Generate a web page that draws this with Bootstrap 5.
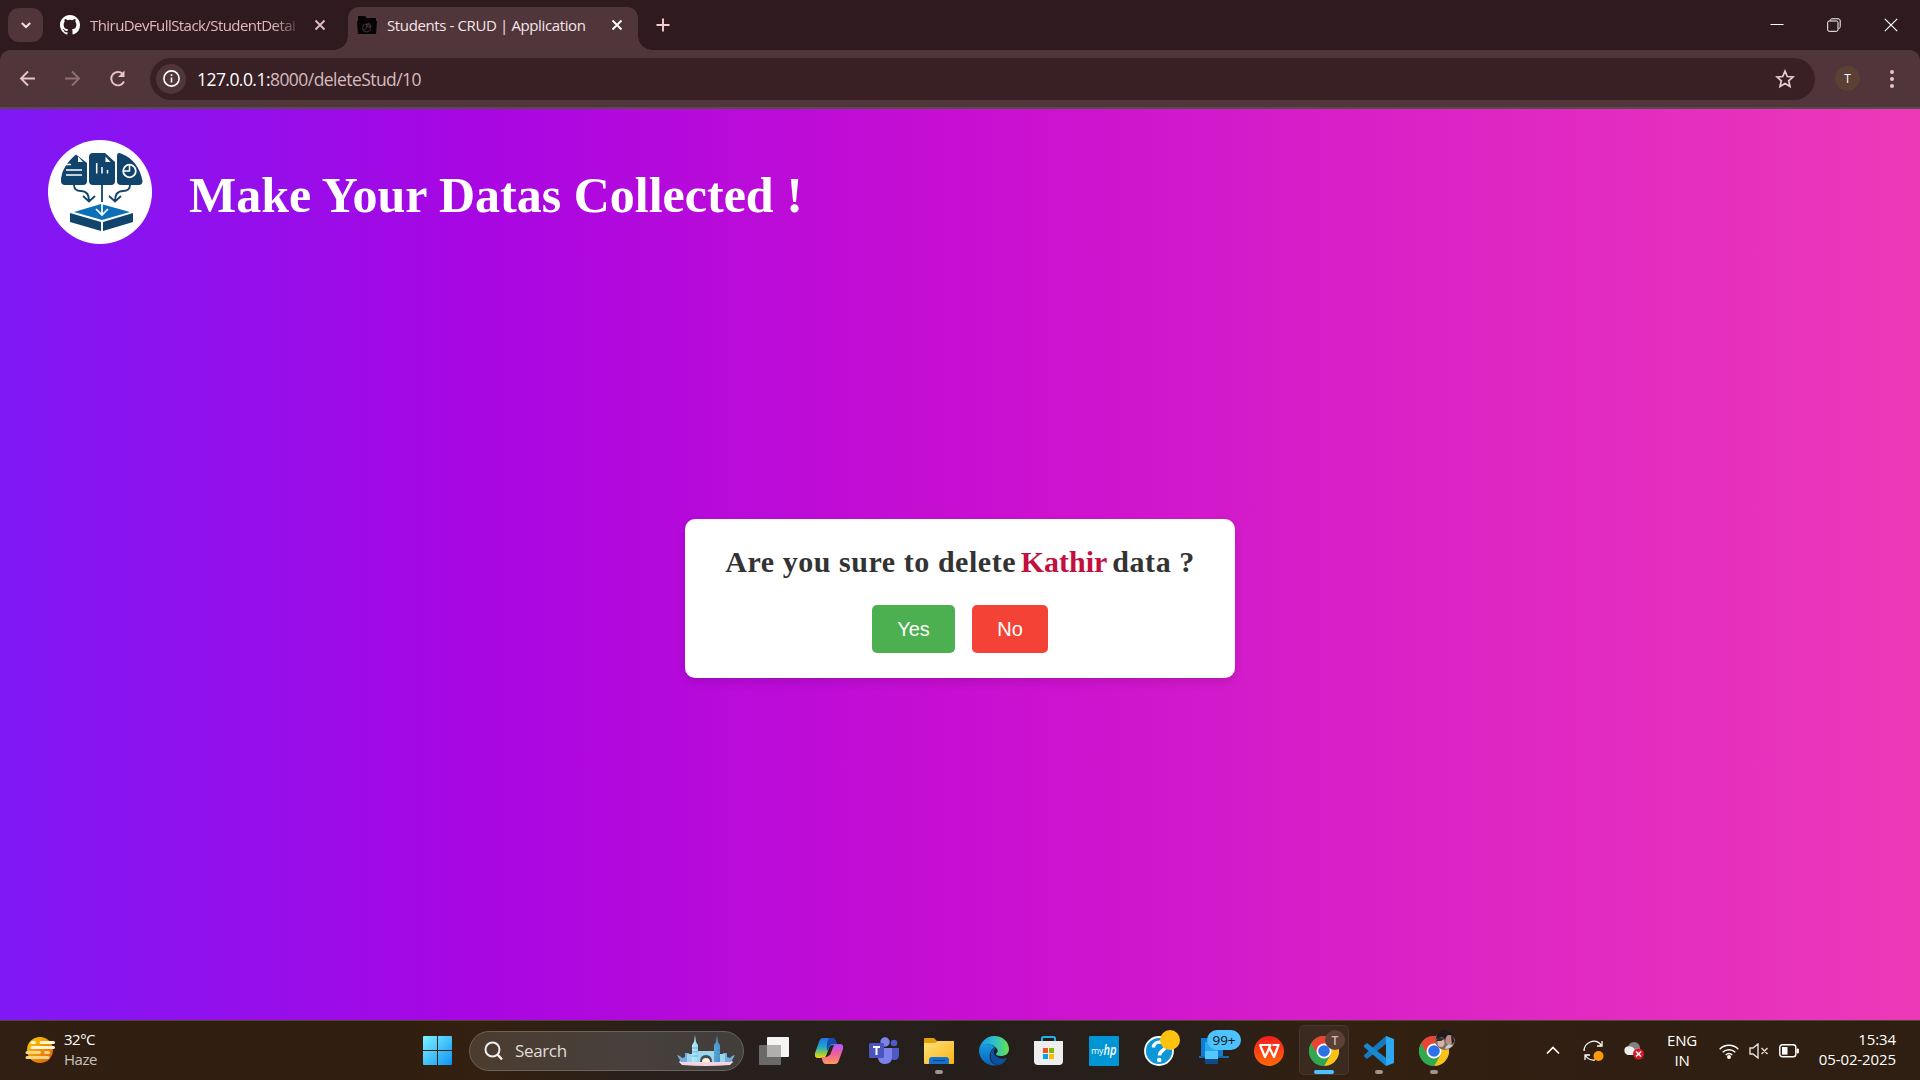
<!DOCTYPE html>
<html lang="en">
<head>
<meta charset="utf-8">
<meta name="viewport" content="width=device-width, initial-scale=1">
<title>Students - CRUD | Application</title>
<link href="https://cdn.jsdelivr.net/npm/bootstrap@5.3.0/dist/css/bootstrap.min.css" rel="stylesheet">
<style>
body{width:1920px;height:1080px;overflow:hidden;font-family:"Open Sans","Noto Sans",sans-serif;line-height:1}
svg{display:block;flex:none}
.tabstrip{height:50px;background:#2f1a1f;padding-left:8px}
.tab-search{width:35px;height:34px;border-radius:11px;background:#50353a;margin-top:8px}
.tab-idle{width:305px;height:50px;padding-left:17px;color:#e2b8bf}
.tab-live{width:290px;height:43px;margin-top:7px;background:#50353a;border-radius:11px 11px 0 0;color:#f5e6e8;padding:0 0 7px 9px;position:relative}
.tab-live::before,.tab-live::after{content:"";position:absolute;bottom:0;width:14px;height:14px}
.tab-live::before{left:-14px;background:radial-gradient(circle at 0 0,transparent 13.5px,#50353a 14px)}
.tab-live::after{right:-14px;background:radial-gradient(circle at 100% 0,transparent 13.5px,#50353a 14px)}
.tab-text{font-size:15px;white-space:nowrap;line-height:22px}
.idle-text{width:208px;letter-spacing:-.56px;margin-left:10px;-webkit-mask-image:linear-gradient(90deg,#000 88%,transparent 103%);mask-image:linear-gradient(90deg,#000 88%,transparent 103%)}
.live-text{width:216px;letter-spacing:-.38px;margin-left:10px}
.toolbar-wrap{height:59px;background:#2f1a1f}
.toolbar-row{height:59px;background:#50353a;border-radius:10px 10px 0 0;border-bottom:2px solid #564c48}
.omnibox{width:1665px;height:42px;border-radius:21px;background:#382024;padding-left:6px}
.site-info{width:30px;height:30px;background:#50353a}
.url-text{font-size:17.5px;color:#d4bcc0;letter-spacing:-.55px;margin-left:11px;line-height:24px}
.url-text span{color:#fff}
.avatar-t{width:25px;height:25px;background:#5b4035;color:#fff;font-size:12px}
.page{height:911px;background:linear-gradient(90deg,#7f18f5 0,#a806e2 25%,#c90fd1 51%,#df27c3 79%,#ed39b8 100%)}
.brand-row{height:167px;padding:31px 0 0 48px}
.brand-title{font:bold 50px/56px "Liberation Serif",serif;color:#fff;margin:27px 0 0 37px;white-space:nowrap}
.ask-area{height:744px;padding-bottom:99px}
.ask-card{width:550px;height:159px;border-radius:10px;background:#fff;box-shadow:0 4px 10px rgba(0,0,0,.12);padding-top:25px}
.ask-title{font:bold 30px/36px "Liberation Serif",serif;color:#333;letter-spacing:.55px;white-space:nowrap;margin:0 0 25px}
.ask-title span{color:#c2103f;letter-spacing:0;margin:0 5px 0 4.5px}
.ask-btn{height:48px;border:0;border-radius:5px;color:#fff;font:20px/23px "Liberation Sans",sans-serif}
.ask-yes{width:83px;background:#4caf50}
.ask-no{width:76px;background:#f44336}
.taskbar{height:60px;background:linear-gradient(90deg,#301f12 0,#301e10 20%,#332010 25%,#28201c 35%,#251e1a 50%,#281f1a 61%,#332010 70%,#301f12 80%,#2e1f12 100%);border-top:1px solid #524532;color:#fff;font-size:15px}
.weather{width:423px;padding-left:24px;line-height:20px}
.weather-text{margin-left:8px;padding-bottom:4px;letter-spacing:-.5px}
.search-pill{width:275px;height:40px;border-radius:20px;border:1px solid #6a625d;background:linear-gradient(90deg,#4c3c2f,#47403c 60%,#423e3b);margin-left:17px;padding-left:14px;color:#e0dcda;font-size:17px}
.task-cell{width:55px;height:59px;position:relative}
.run-dot::after{content:"";position:absolute;bottom:6px;left:23.5px;width:8px;height:4px;border-radius:2px;background:#9c948e}
.live-cell::before{content:"";position:absolute;inset:4px 2px 5px 3px;border:1px solid #463730;border-radius:5px;background:#3a2a20}
.live-cell::after{content:"";position:absolute;bottom:6px;left:17.5px;width:20px;height:4px;border-radius:2px;background:#4cc2ff}
.task-cell svg{position:relative;overflow:visible}
.tray{padding-right:24px}
.lang-text{width:40px;line-height:20px;letter-spacing:-.2px;padding-bottom:2px}
.clock-text{line-height:20px;letter-spacing:-.1px;width:90px;margin-left:7px;white-space:nowrap;padding-bottom:4px}
</style>
</head>
<body class="d-flex flex-column m-0">
<svg width="0" height="0" class="position-absolute">
<defs>
<linearGradient id="gWin" x2="1" y2="1"><stop stop-color="#7cf3ff"/><stop offset="1" stop-color="#0f94f5"/></linearGradient>
<linearGradient id="gSun" x2="1" y2="1"><stop stop-color="#ffd000"/><stop offset="1" stop-color="#e35708"/></linearGradient>
<linearGradient id="gCopA" x2="0" y2="1"><stop stop-color="#2670e8"/><stop offset=".45" stop-color="#20a8c8"/><stop offset=".75" stop-color="#8ac850"/><stop offset="1" stop-color="#f5d800"/></linearGradient>
<linearGradient id="gCopB" x2="0" y2="1"><stop stop-color="#a858ff"/><stop offset=".5" stop-color="#f0609c"/><stop offset="1" stop-color="#ff9a58"/></linearGradient>
<linearGradient id="gFold" x2="1" y2="1"><stop stop-color="#ffe07a"/><stop offset="1" stop-color="#f8b514"/></linearGradient>
<linearGradient id="gEdge" x2="1" y2="0"><stop stop-color="#1595dc"/><stop offset=".5" stop-color="#2bc0cf"/><stop offset="1" stop-color="#65e34a"/></linearGradient>
<linearGradient id="gEdgeB" x2="0" y2="1"><stop stop-color="#169be3"/><stop offset="1" stop-color="#0a60b8"/></linearGradient>
<linearGradient id="gWps" x2="0" y2="1"><stop stop-color="#f51b20"/><stop offset="1" stop-color="#ff6a05"/></linearGradient>
<linearGradient id="gTower" x2="1" y2="0"><stop stop-color="#b4eefa"/><stop offset=".55" stop-color="#68bce5"/><stop offset="1" stop-color="#438fc3"/></linearGradient>
<symbol id="chrome" viewBox="0 0 30 30"><circle cx="15" cy="15" r="15" fill="#33a852"/><path d="M15 15 2 7.5A15 15 0 0 1 28 7.5H15Z" fill="#ea4335"/><path d="M15 7.5h13A15 15 0 0 1 15 30l6.5-11.2Z" fill="#fbc116"/><path d="M2 7.5 8.5 18.8 15 8Z" fill="#ea4335"/><path d="M2 7.5A15 15 0 0 0 15 30l6.5-11.2-13 0Z" fill="#33a852"/><circle cx="15" cy="15" r="7.5" fill="#fff"/><circle cx="15" cy="15" r="5.8" fill="#2e70e8"/></symbol>
</defs></svg>

<header>
<div class="tabstrip d-flex">
  <div class="tab-search d-flex align-items-center justify-content-center"><svg width="12" height="9" viewBox="0 0 12 9" fill="none" stroke="#f5dfe2" stroke-width="2"><path d="m1.8 2 4.2 4L10.2 2"/></svg></div>
  <div class="tab-idle d-flex align-items-center">
    <svg width="20" height="20" viewBox="0 0 16 16" fill="#fff"><path d="M8 0C3.58 0 0 3.58 0 8c0 3.54 2.29 6.53 5.47 7.59.4.07.55-.17.55-.38 0-.19-.01-.82-.01-1.49-2.01.37-2.53-.49-2.69-.94-.09-.23-.48-.94-.82-1.13-.28-.15-.68-.52-.01-.53.63-.01 1.08.58 1.23.82.72 1.21 1.87.87 2.33.66.07-.52.28-.87.51-1.07-1.78-.2-3.64-.89-3.64-3.95 0-.87.31-1.59.82-2.15-.08-.2-.36-1.02.08-2.12 0 0 .67-.21 2.2.82a7.6 7.6 0 0 1 4 0c1.53-1.04 2.2-.82 2.2-.82.44 1.1.16 1.92.08 2.12.51.56.82 1.27.82 2.15 0 3.07-1.87 3.75-3.65 3.95.29.25.54.73.54 1.48 0 1.07-.01 1.93-.01 2.2 0 .21.15.46.55.38A8 8 0 0 0 16 8c0-4.42-3.58-8-8-8Z"/></svg>
    <div class="tab-text idle-text">ThiruDevFullStack/StudentDetai</div>
    <svg width="12" height="12" class="ms-3" viewBox="0 0 12 12" stroke="#e6bcc4" stroke-width="1.8"><path d="m1.5 1.5 9 9m0-9-9 9"/></svg>
  </div>
  <div class="tab-live d-flex align-items-center">
    <svg width="20" height="18" viewBox="0 0 20 18"><path d="M1 0h7l1.5 2H19v3h1l-1 13H1L0 5h1Z" fill="#060405"/><g fill="none" stroke="#4a3438" stroke-width=".9"><circle cx="9.5" cy="12" r="4"/><path d="M9.5 8v4l-3 2.5M11 7a4 4 0 0 1 3 4h-3.5Z"/></g></svg>
    <div class="tab-text live-text">Students - CRUD | Application</div>
    <svg width="12" height="12" class="ms-2" viewBox="0 0 12 12" stroke="#fff" stroke-width="1.8"><path d="m1.5 1.5 9 9m0-9-9 9"/></svg>
  </div>
  <svg width="14" height="14" style="margin:18px 0 0 18px" viewBox="0 0 14 14" stroke="#f5ccd2" stroke-width="1.9"><path d="M7 .5v13M.5 7h13"/></svg>
  <div class="d-flex ms-auto align-items-center" style="padding-right:22px;gap:43px">
    <svg width="14" height="14" viewBox="0 0 14 14" stroke="#fff"><path d="M.5 6.5h13"/></svg>
    <svg width="14" height="14" viewBox="0 0 14 14" fill="none" stroke="#fff"><rect x=".7" y="3" width="10.3" height="10.3" rx="1.5"/><path d="M3.2 2.6C3.5 1.2 4 .8 5 .8h6c1.5 0 2.2.7 2.2 2.2v5.6c0 1-.5 1.700-1.600 2"/></svg>
    <svg width="14" height="14" viewBox="0 0 14 14" stroke="#fff" stroke-width="1.2"><path d="M.8.8 13.2 13.2M13.2.8.8 13.2"/></svg>
  </div>
</div>
<div class="toolbar-wrap">
<div class="toolbar-row d-flex align-items-center">
  <svg width="150" height="57" viewBox="0 0 150 57" fill="none" stroke="#ecc2c9" stroke-width="1.9"><path d="M35 28.5H21.500M28 21.500l-7 7 7 7"/><path d="M65 28.500h13.500M72 21.500l7 7-7 7" stroke="#8f7075"/><path d="M124 31.500a6.700 6.700 0 1 1-1.200-7.500"/><path d="M124.500 20.500v6.500H118z" fill="#ecc2c9" stroke="none"/></svg>
  <div class="omnibox d-flex align-items-center">
    <div class="site-info rounded-circle d-flex align-items-center justify-content-center"><svg width="17" height="17" viewBox="0 0 17 17" fill="none" stroke="#fff" stroke-width="1.6"><circle cx="8.5" cy="8.5" r="7.6"/><path d="M8.500 7.500v5M8.500 4.300V6"/></svg></div>
    <div class="url-text"><span>127.0.0.1:</span>8000/deleteStud/10</div>
    <svg width="20" height="20" class="ms-auto" style="margin-right:20px" viewBox="0 0 20 20" fill="none" stroke="#e6cdd1" stroke-width="1.7"><path d="m10 2.200 2.300 5.300 5.700.500-4.300 3.800 1.300 5.700-5-3-5 3 1.300-5.700L2 8l5.700-.500Z"/></svg>
  </div>
  <div class="avatar-t rounded-circle d-flex align-items-center justify-content-center" style="margin-left:20px">T</div>
  <svg width="6" height="20" style="margin-left:29px" viewBox="0 0 6 20" fill="#efc2ca"><circle cx="3" cy="3" r="2"/><circle cx="3" cy="10" r="2"/><circle cx="3" cy="17" r="2"/></svg>
</div>
</div>
</header>

<main class="page">
  <div class="brand-row d-flex">
    <svg width="104" height="104" viewBox="0 0 104 104"><circle cx="52" cy="52" r="52" fill="#fff"/>
      <g fill="#10446c"><path d="M28 14.500 39 23v18q0 4-4 4H17q-4 0-4-4 0-14 15-26.500Z"/><path d="M45 13h12l10 9v19q0 4-4 4H45q-4 0-4-4V17q0-4 4-4Z"/><path d="M69 16q0-4 4-2.500C85 18 92 28 94.500 41q0 4-4 4H73q-4 0-4-4Z"/><path d="m22 73 31 9v9L22 82ZM85 73l-30 9v9l30-9Z"/></g>
      <path d="m53 64 29 8-28 8-28-8Z" fill="#0b70b8"/>
      <path d="M30 16.500v5.500h5ZM57.500 16.500v5.500h5Z" fill="#fff"/>
      <g fill="none" stroke="#fff" stroke-width="1.5"><path d="M17 24.500h6M18 30h16M18 35h16M48.700 23v10.500M54 27v6.500M59.500 30v3.500"/><circle cx="81.5" cy="31" r="6.3" stroke-width="1.8"/><path d="M81.500 25v6H75.500"/><path d="M54 62v12M48 69l6 6 6-6" stroke-width="1.7"/></g>
      <g fill="none" stroke="#10446c" stroke-width="1.8"><path d="M26 45q0 6 7 6 8 0 8 10M35 56l6 5.500 6-5.500M82 45q0 6-7 6-8 0-8 10M61 56l6 5.500 6-5.500M54 45v17"/></g></svg>
    <h1 class="brand-title">Make Your Datas Collected !</h1>
  </div>
  <div class="ask-area d-flex align-items-center justify-content-center">
    <div class="ask-card text-center">
      <h2 class="ask-title">Are you sure to delete<span>Kathir</span>data ?</h2>
      <div class="d-flex justify-content-center" style="gap:17px"><button class="ask-btn ask-yes">Yes</button><button class="ask-btn ask-no">No</button></div>
    </div>
  </div>
</main>

<footer class="taskbar d-flex align-items-center">
  <div class="weather d-flex align-items-center">
    <svg width="32" height="28" viewBox="0 0 32 28"><circle cx="16" cy="13" r="13" fill="url(#gSun)"/><g stroke="#fff5d5" stroke-width="3" stroke-linecap="round"><path d="M8 5.500h2.500M17 5.500h12.500M8 10.500h21.500"/><path d="M3 15.500h12.500M21.500 15.500h3M3 20.500h21" stroke="#f0d58b"/></g></svg>
    <div class="weather-text"><div>32°C</div><div style="color:#c9c2bc">Haze</div></div>
  </div>
  <svg width="29" height="29" viewBox="0 0 29 29" fill="url(#gWin)"><path d="M1 0h13v14H0V1q0-1 1-1ZM15 0h13q1 0 1 1v13H15ZM0 15h14v14H1q-1 0-1-1ZM15 15h14v13q0 1-1 1H15Z"/></svg>
  <div class="search-pill d-flex align-items-center">
    <svg width="19" height="20" viewBox="0 0 19 20" fill="none" stroke="#eee" stroke-width="2"><circle cx="8.5" cy="8.5" r="7"/><path d="m13.500 13.500 4.500 5" stroke-width="2.5"/></svg>
    <span style="margin-left:12px;letter-spacing:-.35px">Search</span>
    <svg width="58" height="34" class="ms-auto" style="margin-right:8px" viewBox="0 0 58 34"><path d="M2 28q1-3 10-3h34q9 0 10 3l-3 3q-24 2-48 0Z" fill="#f5d4df"/><path d="M0 21l3 1 2 2 3-1v-4h4v9H4ZM58 21l-3 1-2 2-3-1v-4h-4v9h8Z" fill="#6faed8"/><path d="M18 1l1 7 2 3v17h-6V11l2-3ZM40 1l1 7 2 3v17h-6V11l2-3Z" fill="url(#gTower)"/><path d="M10 20h5v8h-5ZM21 17h16v11H21ZM43 20h5v8h-5Z" fill="#9bd6ef"/><path d="M15 14h6M15 18h6M15 22h6M37 14h6M37 18h6M37 22h6" stroke="#5fa3d2" stroke-width=".8"/><path d="M23 28q0-7 6-7t6 7Z" fill="#424d5a"/><path d="M25 28q0-4 4-4t4 4Z" fill="#fff3cf"/></svg>
  </div>
  <nav class="d-flex" style="margin-left:2px">
    <div class="task-cell d-flex align-items-center justify-content-center"><svg width="30" height="28" viewBox="0 0 30 28"><rect x="8" y="0" width="22" height="20" rx="1" fill="#f4f4f4"/><rect x="0" y="8" width="22" height="20" rx="1" fill="#6c6a69"/><path d="M8 8h14v12H8Z" fill="#b1afae"/></svg></div>
    <div class="task-cell d-flex align-items-center justify-content-center"><svg width="28" height="26" viewBox="0 0 28 26"><path d="M8 0h9q3 0 4 4l1 3h-4q-3 0-4 3l-3 8q-1 2-4 2H3q-4 0-3-5L4 4Q5 0 8 0Z" fill="url(#gCopA)"/><path d="M20 26h-9q-3 0-4-5l-1-2h4q3 0 4-3l3-8q1-2 4-2h4q4 0 3 5l-4 11q-1 4-4 4Z" fill="url(#gCopB)"/><path d="M14 0h3q3 0 4 4l1 2h-5q-2 0-3 3l-2 4q-1-9 2-13Z" fill="#174aae"/><path d="m15 10-4 9 4-2 4-10q-3 0-4 3Z" fill="#2a201c"/></svg></div>
    <div class="task-cell d-flex align-items-center justify-content-center"><svg width="30" height="27" viewBox="0 0 30 27"><circle cx="25" cy="6" r="3.3" fill="#5059c9"/><path d="M20 11h10v7q0 5-5 5-4 0-5-3Z" fill="#4e59c5"/><circle cx="16" cy="5" r="4.7" fill="#7b83eb"/><path d="M10 11h13v9q0 7-7 7-6 0-7-6Z" fill="#7b83eb"/><rect y="6" width="15" height="15" rx="1.5" fill="#4b53bc"/><path d="M4 10h7M7.500 10v8" stroke="#fff" stroke-width="2"/></svg></div>
    <div class="task-cell run-dot d-flex align-items-center justify-content-center"><svg width="30" height="26" viewBox="0 0 30 26"><path d="M1 0h9l3 3h17v6H0V1q0-1 1-1Z" fill="#e0a008"/><path d="M0 5h11l3-2h15q1 0 1 1v21q0 1-1 1H1q-1 0-1-1Z" fill="url(#gFold)"/><path d="M5 26v-4q0-3 3-3h14q3 0 3 3v4Z" fill="#1274ce"/><path d="M9 22.500h12" stroke="#07418d" stroke-width="1.2"/></svg></div>
    <div class="task-cell d-flex align-items-center justify-content-center"><svg width="30" height="30" viewBox="0 0 30 30"><path d="M0 15A15 15 0 0 0 19 29C9 29 8 15 16 11 9 6 1 9 0 15Z" fill="url(#gEdgeB)"/><path d="M16 11c-7 4-6 18 4 18q5-1 8-7-6 2-10-1c-3-2-4-5-2-8Z" fill="#0c50a0"/><path d="M0 14C1 6 8 0 15 0c9 0 15 6 15 13 0 5-4 7-8 7-3 0-5-1-5-2s3-2 1-5C14 7 4 7 0 14Z" fill="url(#gEdge)"/></svg></div>
    <div class="task-cell d-flex align-items-center justify-content-center"><svg width="29" height="29" viewBox="0 0 29 29"><path d="M8 6V2.500Q8 1 9.500 1h10Q21 1 21 2.500V6" fill="none" stroke="#26aee9" stroke-width="2"/><path d="M0 5h29v20q0 4-4 4H4q-4 0-4-4Z" fill="#eee"/><path d="M9 12h5v5H9Z" fill="#f25022"/><path d="M15 12h5v5h-5Z" fill="#7fba00"/><path d="M9 18h5v5H9Z" fill="#00a4ef"/><path d="M15 18h5v5h-5Z" fill="#ffb900"/></svg></div>
    <div class="task-cell d-flex align-items-center justify-content-center"><svg width="30" height="30" viewBox="0 0 30 30"><rect width="30" height="30" rx="1" fill="#0096d6"/><text x="2" y="18" font-family="Open Sans" font-size="9.5" fill="#fff" textLength="12.5" lengthAdjust="spacingAndGlyphs">my</text><text x="14.5" y="18.5" font-family="Open Sans" font-size="14" font-weight="600" font-style="italic" fill="#fff" textLength="13" lengthAdjust="spacingAndGlyphs">hp</text></svg></div>
    <div class="task-cell d-flex align-items-center justify-content-center"><svg width="30" height="30" viewBox="0 0 30 30"><circle cx="15" cy="15" r="14" fill="#0c98d8" stroke="#fff" stroke-width="1.8"/><path d="M9.500 11.500c0-7 12-7 12-1 0 4-6 4-6 9" fill="none" stroke="#fff" stroke-width="3.5"/><circle cx="15.2" cy="24" r="2.3" fill="#fff"/><circle cx="26" cy="4" r="10" fill="#ffc20e"/></svg></div>
    <div class="task-cell d-flex align-items-center justify-content-center"><svg width="30" height="30" viewBox="0 0 30 30"><path d="M2 2h22v18H2Z" fill="#107dd2"/><path d="M0 20h30v2H0Z" fill="#1769ad"/><path d="M6 6h13v14H6Z" fill="#27a8f0"/><path d="M6 15h13v8H6Z" fill="#54c8f8"/><path d="M6 23h13v5H6Z" fill="#104b87"/><rect x="8" y="-6" width="34" height="20" rx="10" fill="#4cc2ff"/><text x="25" y="8.5" font-family="Open Sans" font-size="13.5" text-anchor="middle" fill="#111">99+</text></svg></div>
    <div class="task-cell d-flex align-items-center justify-content-center"><svg width="30" height="30" viewBox="0 0 30 30"><circle cx="15" cy="15" r="15" fill="url(#gWps)"/><path d="M5.500 9h11l-3.500 8M6 9l5 12 4.500-9 4.500 9 4.500-12h-6" fill="none" stroke="#fff" stroke-width="2.2" stroke-linejoin="round"/></svg></div>
    <div class="task-cell live-cell d-flex align-items-center justify-content-center"><svg width="30" height="30" viewBox="0 0 30 30"><use href="#chrome" width="30" height="30"/><circle cx="26" cy="4" r="10" fill="#5d4037"/><text x="26" y="8.5" text-anchor="middle" font-family="Open Sans" font-size="12" font-weight="600" fill="#c9bdb8">T</text></svg></div>
    <div class="task-cell run-dot d-flex align-items-center justify-content-center"><svg width="30" height="30" viewBox="0 0 30 30"><path d="M22 0v8L3 23 0 20.500V19Z" fill="#1679be"/><path d="M0 9.500 3 7l19 15v8L0 11Z" fill="#1788d2"/><path d="m22 0 8 3v24l-8 3Z" fill="#2da9f1"/></svg></div>
    <div class="task-cell run-dot d-flex align-items-center justify-content-center"><svg width="30" height="30" viewBox="0 0 30 30"><use href="#chrome" width="30" height="30"/><circle cx="26" cy="4" r="10" fill="#7a6a67"/><path d="M18-2a10 10 0 0 1 18 5l-4-4-3 1-2 4-4-3-6 2Z" fill="#211a1c"/><ellipse cx="30" cy="4" rx="3.5" ry="5" fill="#b98e80"/><ellipse cx="22" cy="7" rx="3.5" ry="4" fill="#d6b3a6"/><path d="M26 13q1-6 8-4-3 4-8 4Z" fill="#c9d0d2"/><path d="M17 5q2-5 8-2l-3 2Z" fill="#302628"/><path d="M32 0q3 1 3 6l-2 2Z" fill="#211a1c"/></svg></div>
  </nav>
  <div class="tray d-flex align-items-center ms-auto">
    <svg width="14" height="9" viewBox="0 0 14 9" fill="none" stroke="#fff" stroke-width="1.7"><path d="m1 7.500 6-6 6 6"/></svg>
    <svg width="21" height="22" style="margin-left:23px" viewBox="0 0 21 22" fill="none" stroke="#fff" stroke-width="1.3"><path d="M1 11C1 3 12-3 18 5M19 1v5h-5M2 20v-5h5M2 15q4 6 10 5"/><circle cx="15.5" cy="16" r="5" fill="#ff9b08" stroke="none"/></svg>
    <svg width="22" height="18" style="margin-left:19px" viewBox="0 0 22 18"><circle cx="11" cy="6" r="6" fill="#858180"/><path d="M12 6h5q1 6-3 7h-4Z" fill="#999"/><path d="M5 13a4.500 4.500 0 0 1-1-8.500q6-1 8 4v4.500Z" fill="#eee"/><circle cx="15.5" cy="12" r="5.5" fill="#d71828"/><path d="m13 9.500 5 5m0-5-5 5" stroke="#fff" stroke-width="1.5"/></svg>
    <div class="lang-text text-center" style="margin-left:17px">ENG<br>IN</div>
    <svg width="20" height="16" style="margin-left:17px" viewBox="0 0 20 16" fill="none" stroke="#fff" stroke-width="1.5"><path d="M.700 6.200a13 13 0 0 1 18.600 0M3.700 9.200a9 9 0 0 1 12.600 0M6.700 12a5 5 0 0 1 6.600 0"/><circle cx="10" cy="14" r="1.2" fill="#fff"/></svg>
    <svg width="20" height="16" style="margin-left:10px" viewBox="0 0 20 16" fill="none" stroke="#e5dfda" stroke-width="1.4"><path d="M1 5h3l5-4v14l-5-4H1ZM12.500 5l6 6m0-6-6 6"/></svg>
    <svg width="20" height="14" style="margin-left:10px" viewBox="0 0 20 14"><rect x=".8" y=".8" width="16" height="12" rx="2.5" fill="none" stroke="#fff" stroke-width="1.4"/><rect x="3" y="3" width="5.5" height="7.6" fill="#fff"/><path d="M18 5h1.300v4H18z" fill="#fff" stroke="#fff"/></svg>
    <div class="clock-text text-end">15:34<br>05-02-2025</div>
  </div>
</footer>
<script src="https://cdn.jsdelivr.net/npm/bootstrap@5.3.0/dist/js/bootstrap.bundle.min.js"></script>
</body>
</html>
